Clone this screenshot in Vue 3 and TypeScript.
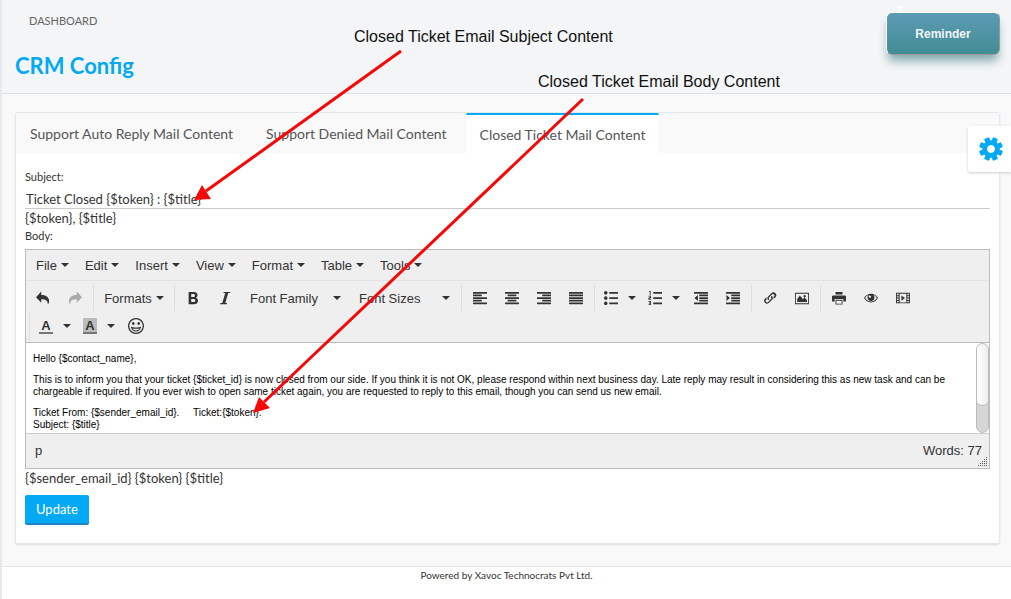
<script setup lang="ts">
import { ref } from 'vue'

interface Icon { d: string; muted?: boolean }
interface Tool { kind: 'icon' | 'split' | 'color' | 'menu' | 'select'; label: string; icon?: Icon; boxed?: boolean }

const tabs = ['Support Auto Reply Mail Content', 'Support Denied Mail Content', 'Closed Ticket Mail Content']
const activeTab = ref(2)
const subject = ref('Ticket Closed {$token} : {$title}')

const menus = ['File', 'Edit', 'Insert', 'View', 'Format', 'Table', 'Tools']

const bar = (x: number, y: number, w: number) => `M${x} ${y}h${w}v2h${-w}z`
const icon = (label: string, d: string, muted = false): Tool => ({ kind: 'icon', label, icon: { d, muted } })

const undo = 'M6 0.5v4c6 0 9 3 9 7 0 1.500-.6 3-1.500 4 .2-4-2-6-7.500-6v4L0 7z'
const redo = 'M10 0.5v4c-6 0-9 3-9 7 0 1.500.6 3 1.500 4-.2-4 2-6 7.500-6v4L16 7z'
const dot = (y: number) => `M2 ${y - 2}a2 2 0 1 0 .01 0z`
const full = bar(0, 1, 16) + bar(0, 13, 16)

const rows: Tool[][][] = [
  [
    [icon('Undo', undo), icon('Redo', redo, true)],
    [{ kind: 'menu', label: 'Formats' }],
    [
      icon('Bold', 'M3 1h6.200c2.600 0 4 1.500 4 3.600 0 1.500-.8 2.600-2 3.100 1.600.4 2.500 1.700 2.500 3.400C13.700 13.600 12 15 9.300 15H3zM6 3.300v3.500h2.300c1.200 0 1.900-.7 1.900-1.800s-.7-1.700-1.900-1.700zM6 9v3.700h2.600c1.300 0 2-.7 2-1.900S9.900 9 8.600 9z'),
      icon('Italic', 'M6.500 1H14l-.3 1.200h-2L8.300 13.800h2L10 15H2.500l.3-1.200h2.100L8.300 2.200h-2z'),
      { kind: 'select', label: 'Font Family' },
      { kind: 'select', label: 'Font Sizes' },
    ],
    [
      icon('Align left', full + bar(0, 4, 10) + bar(0, 7, 16) + bar(0, 10, 10)),
      icon('Align center', full + bar(3, 4, 10) + bar(0, 7, 16) + bar(3, 10, 10)),
      icon('Align right', full + bar(6, 4, 10) + bar(0, 7, 16) + bar(6, 10, 10)),
      icon('Justify', full + bar(0, 4, 16) + bar(0, 7, 16) + bar(0, 10, 16)),
    ],
    [
      { kind: 'split', label: 'Bullet list', icon: { d: bar(6, 1, 10) + bar(6, 7, 10) + bar(6, 13, 10) + dot(2) + dot(8) + dot(14) } },
      { kind: 'split', label: 'Numbered list', icon: { d: bar(6, 1, 10) + bar(6, 7, 10) + bar(6, 13, 10) + 'M1.500 0H3v4.500H2V1H1zM.5 5.500h3v2.600l-2 1h2v1H.5V7.600l2-.8v-.4h-2zM.5 11.500h3V16h-3v-1h2v-.8h-1.500v-1h1.500v-.8h-2z' } },
      icon('Decrease indent', full + bar(6, 4, 10) + bar(6, 7, 10) + bar(6, 10, 10) + 'M4.500 4.500v7L0.5 8z'),
      icon('Increase indent', full + bar(6, 4, 10) + bar(6, 7, 10) + bar(6, 10, 10) + 'M0.5 4.500v7l4-3.500z'),
    ],
    [
      icon('Insert link', 'M6.900 9.900l-.8.800a3.200 3.200 0 0 1 0-4.600l3.500-3.500a3.300 3.300 0 0 1 4.600 0 3.300 3.300 0 0 1 0 4.600l-2 2c.1-.8 0-1.600-.3-2.300l1-1a1.700 1.700 0 0 0-2.300-2.300L7.100 7.100a1.700 1.700 0 0 0 0 2.300zM9.300 6.100l.8-.4a3.200 3.200 0 0 1 .1 4.600l-3.700 3.500a3.300 3.300 0 0 1-4.600-4.600l2-2c-.1.800 0 1.600.3 2.300l-1 1a1.700 1.700 0 0 0 2.300 2.300l3.500-3.500a1.700 1.700 0 0 0 0-2.300z'),
      icon('Insert image', 'M0 2h16v13H0zM1 3v11h14V3zM2.500 12.500V9l3-4 3.500 4.200 2-1.700 2.700 3v2zM11 4.500a1.400 1.400 0 1 0 .01 0z'),
    ],
    [
      icon('Print', 'M4 1h8v3H4zM1 5h14l1 1v6h-3V9H3v3H0V6zM4 10h8v5.500H4zM5 11v3.500h6V11z'),
      icon('Preview', 'M8 3c3.500 0 6.500 2 8 5-1.500 3-4.500 5-8 5s-6.500-2-8-5c1.500-3 4.500-5 8-5zM1.300 8c1.200 2.300 3.800 4 6.700 4s5.500-1.700 6.700-4C13.700 6.200 12 4.800 10.500 4.400a4 4 0 1 1-5 0C4 4.800 2.300 6.200 1.300 8zM6.700 5a1.400 1.400 0 1 0 .01 0z'),
      icon('Insert video', 'M0 2h16v12H0zM1 3.200v1.600h2V3.200zM1 6v1.500h2V6zM1 8.700v1.500h2V8.700zM1 11.300v1.500h2v-1.500zM4.200 3v10h7.600V3zM13 3.200v1.600h2V3.200zM13 6v1.500h2V6zM13 8.700v1.500h2V8.700zM13 11.300v1.500h2v-1.500zM6.200 5l4 3-4 3z'),
    ],
  ],
  [
    [
      { kind: 'color', label: 'Text color' },
      { kind: 'color', label: 'Background color', boxed: true },
      icon('Emoticons', 'M8 0a8 8 0 1 1-.01 0zM8 1.300a6.700 6.700 0 1 0 .01 0zM5.300 4a1.300 1.500 0 1 1-.01 0zM10.700 4a1.300 1.500 0 1 1-.01 0zM2.800 8.500c1.500.8 3.300 1.100 5.200 1.100s3.700-.3 5.200-1.100c-.4 2.900-2.500 5-5.200 5s-4.800-2.100-5.200-5zM4.500 10.400c.8 1.300 2 2 3.500 2s2.700-.7 3.500-2c-1.100.3-2.300.4-3.500.4s-2.400-.1-3.500-.4z'),
    ],
  ],
]

const gear = (() => {
  const p = (r: number, deg: number) => {
    const a = (deg * Math.PI) / 180
    return `${(12 + r * Math.cos(a)).toFixed(2)} ${(12 + r * Math.sin(a)).toFixed(2)}`
  }
  let d = ''
  for (let i = 0; i < 8; i++) {
    const c = i * 45 + 22.5
    d += `${i ? 'L' : 'M'}${p(8.8, c - 17)}L${p(11.4, c - 14)}Q${p(12.1, c - 12)} ${p(12, c - 8)}L${p(12, c + 8)}Q${p(12.1, c + 12)} ${p(11.4, c + 14)}L${p(8.8, c + 17)}`
  }
  return d + 'zM12 8a4 4 0 1 0 .01 0z'
})()
</script>

<template>
  <div class="page">
    <header class="top">
      <div class="heading">
        <a class="crumb" href="#">DASHBOARD</a>
        <h1>CRM Config</h1>
      </div>
      <button class="reminder" type="button">Reminder</button>
    </header>

    <main>
      <section class="card">
        <div class="tabs" role="tablist">
          <button v-for="(t, i) in tabs" :key="t" type="button" role="tab" class="tab" :class="{ active: i === activeTab }" :aria-selected="i === activeTab" @click="activeTab = i">{{ t }}</button>
        </div>

        <form class="form" @submit.prevent>
          <label class="label" for="subject">Subject:</label>
          <input id="subject" v-model="subject" class="subject" type="text" />
          <p class="hint">{$token}, {$title}</p>
          <span id="body-label" class="label">Body:</span>

          <div class="editor">
            <div class="menubar">
              <button v-for="m in menus" :key="m" type="button" class="menu">{{ m }}<i class="caret"></i></button>
            </div>
            <div class="toolbar">
              <div v-for="(row, r) in rows" :key="r" class="row" :class="{ second: r === 1 }">
                <div v-for="(group, g) in row" :key="g" class="group">
                  <template v-for="tool in group" :key="tool.label">
                    <span v-if="tool.kind === 'select'" class="pick">
                      <select :aria-label="tool.label"><option>{{ tool.label }}</option></select>
                      <i class="caret"></i>
                    </span>
                    <button v-else type="button" class="tool" :class="tool.kind" :aria-label="tool.label">
                      <template v-if="tool.kind === 'menu'">{{ tool.label }}</template>
                      <span v-else-if="tool.kind === 'color'" class="letter" :class="{ boxed: tool.boxed }">A</span>
                      <svg v-else-if="tool.icon" viewBox="0 0 16 16" :class="{ muted: tool.icon.muted, large: tool.label === 'Emoticons' }"><path :d="tool.icon.d" fill-rule="evenodd" /></svg>
                      <i v-if="tool.kind !== 'icon'" class="caret"></i>
                    </button>
                  </template>
                </div>
              </div>
            </div>
            <div class="canvas">
              <div class="text" contenteditable="true" role="textbox" aria-multiline="true" aria-labelledby="body-label" spellcheck="false">
                <p>Hello {$contact_name},</p>
                <p>This is to inform you that your ticket {$ticket_id} is now closed from our side. If you think it is not OK, please respond within next business day. Late reply may result in considering this as new task and can be chargeable if required. If you ever wish to open same ticket again, you are requested to reply to this email, though you can send us new email.</p>
                <p>Ticket From: {$sender_email_id}. &nbsp; &nbsp; Ticket:{$token}.<br />Subject: {$title}</p>
              </div>
              <div class="track"><div class="thumb"></div></div>
            </div>
            <div class="status">
              <span>p</span>
              <span>Words: 77</span>
              <svg class="grip" viewBox="0 0 9 9"><path d="M8 0h1v1H8zM6 2h1v1H6zM8 2h1v1H8zM4 4h1v1H4zM6 4h1v1H6zM8 4h1v1H8zM2 6h1v1H2zM4 6h1v1H4zM6 6h1v1H6zM8 6h1v1H8zM0 8h1v1H0zM2 8h1v1H2zM4 8h1v1H4zM6 8h1v1H6zM8 8h1v1H8z" /></svg>
            </div>
          </div>

          <p class="hint">{$sender_email_id} {$token} {$title}</p>
          <button class="update" type="submit">Update</button>
        </form>
      </section>
    </main>

    <footer>Powered by Xavoc Technocrats Pvt Ltd.</footer>

    <button class="settings" type="button" aria-label="Settings">
      <svg viewBox="0 0 24 24"><path :d="gear" fill-rule="evenodd" /></svg>
    </button>

    <p class="note subject-note">Closed Ticket Email Subject Content</p>
    <p class="note body-note">Closed Ticket Email Body Content</p>
    <svg class="arrows" width="620" height="430" viewBox="0 0 620 430" aria-hidden="true">
      <path d="M401 51L206 191M583 99L264 402" />
      <path class="head" d="M194 200L202 185L211 199zM253 413L259 397L270 408z" />
    </svg>
  </div>
</template>

<style>
body { background: #fff; }
</style>

<style scoped>
* { box-sizing: border-box; }
.page { position: relative; min-height: 100vh; border-left: 2px solid #e6e9ed; font-family: Lato, "Open Sans", sans-serif; font-size: 13px; color: #333; background: #fff; }
button, select, input { font: inherit; color: inherit; margin: 0; }
button { border: 0; background: none; padding: 0; cursor: pointer; }
p, h1 { margin: 0; }

.top { display: flex; justify-content: space-between; align-items: flex-start; height: 94px; padding: 12px 11px 0 13px; background: #f3f5f7; border-bottom: 1px solid #dde1e6; }
.heading { display: flex; flex-direction: column; }
.crumb { margin-left: 14px; font-size: 11px; line-height: 18px; color: #666; text-decoration: none; }
h1 { margin-top: 20px; font-size: 22px; line-height: 32px; font-weight: 700; color: #03a9f4; }
.reminder { position: relative; width: 114px; height: 43px; font: bold 12px "Liberation Sans", Arial, sans-serif; color: #f3f5f7; border: 1px solid; border-color: #fff #999 #999 #fff; border-radius: 6px; background: linear-gradient(#5c9cb5, #428b93) border-box; box-shadow: 0 8px 10px -2px #86abb1; }
.reminder::before { content: ""; position: absolute; left: 9px; top: -7px; border: solid transparent; border-width: 4px 4px 0; border-top-color: #fff; }

main { padding: 18px 11px 22px 13px; background: #f9f9f9; }
.card { border: 1px solid #e4e9ee; border-bottom-color: #e6e6e6; border-radius: 3px; background: #fff; box-shadow: 0 1px 2px #ddd; }
.tabs { display: flex; gap: 5px; height: 40px; background: #f9f9f9; }
.tab { padding: 0 14px 2px; font-size: 14px; color: #555; white-space: nowrap; border-top: 2px solid transparent; }
.tab.active { padding-bottom: 0; background: #fff; border-top-color: #03a9f4; border-radius: 2px 2px 0 0; }

.form { padding: 15px 9px 18px; display: flex; flex-direction: column; align-items: stretch; }
.label { font-size: 11px; line-height: 18px; }
.subject { height: 23px; padding: 4px 1px 0; border: 0; border-bottom: 1px solid #ccc; outline: 0; font-size: 13px; background: none; }
.hint { font-size: 13px; line-height: 18px; }
.editor { margin-top: 4px; border: 1px solid #bbb; background: #efefef; font-family: "Liberation Sans", Arial, sans-serif; font-size: 13px; }
.caret { flex: none; width: 0; height: 0; border: solid transparent; border-width: 4px 4px 0; border-top-color: #333; }
.menubar { display: flex; height: 31px; padding-left: 2px; border-bottom: 1px solid #e3e3e3; }
.menu { display: flex; align-items: center; gap: 4px; padding: 0 8px; }
.toolbar { padding-left: 1px; border-bottom: 1px solid #bbb; }
.row { display: flex; height: 30px; padding-top: 4px; }
.row.second { height: 31px; padding: 1px 0 1px 2px; }
.group { display: flex; padding: 0 2px; border-left: 1px solid #ddd; }
.row:not(.second) .group:first-child { border-left: 0; padding-left: 0; }
.tool { display: flex; align-items: center; justify-content: center; width: 32px; height: 26px; }
.row.second .tool { height: 27px; }
.tool svg { width: 14px; height: 14px; fill: #333; }
.tool svg.large { width: 16px; height: 16px; }
.tool svg.muted { fill: #aaa; }
.tool.menu { width: 76px; padding: 0; gap: 4px; }
.tool.split, .tool.color { width: 44px; gap: 10px; justify-content: flex-start; padding-left: 7px; }
.letter { width: 14px; height: 16px; font-size: 13px; line-height: 15px; font-weight: 700; border-bottom: 2px solid #777; }
.letter.boxed { background: #bbb; }
.pick { position: relative; display: flex; align-items: center; width: 109px; }
.pick select { width: 100%; height: 26px; padding: 0 0 0 9px; appearance: none; border: 0; background: none; outline: 0; }
.pick .caret { position: absolute; right: 9px; }
.canvas { display: flex; height: 90px; background: #fff; }
.text { flex: 1; overflow: hidden; padding: 10px 7px 0; outline: 0; font-size: 10px; line-height: 12px; color: #000; }
.text p { margin-bottom: 9px; }
.track { width: 13px; border: 1px solid #bbb; border-radius: 7px; background: #d6d6d6; }
.thumb { height: 62px; border-bottom: 1px solid #bbb; border-radius: 6px; background: linear-gradient(90deg, #fff, #eee); }
.status { position: relative; display: flex; justify-content: space-between; align-items: center; height: 35px; padding: 0 7px 2px 9px; border-top: 1px solid #ccc; }
.grip { position: absolute; right: 2px; bottom: 2px; width: 9px; height: 9px; fill: #555; }
.update { align-self: flex-start; margin-top: 8px; height: 30px; padding: 0 11px; font-size: 13px; color: #fff; background: #03a9f4; border-bottom: 2px solid #1b87c9; border-radius: 2px; }

footer { border-top: 1px solid #e4e4e4; font-size: 10px; line-height: 17px; text-align: center; }
.settings { position: absolute; right: 0; top: 126px; width: 43px; height: 46px; padding-left: 2px; display: flex; align-items: center; justify-content: center; background: #fff; border-radius: 3px 0 0 3px; box-shadow: 0 1px 3px #ccc; }
.settings svg { width: 24px; height: 24px; fill: #03a9f4; }
.note { position: absolute; font: 16px/20px "Liberation Sans", Arial, sans-serif; color: #111; white-space: nowrap; }
.subject-note { left: 352px; top: 27px; }
.body-note { left: 536px; top: 72px; }
.arrows { position: absolute; left: -2px; top: 0; pointer-events: none; fill: none; stroke: #f40808; stroke-width: 3; }
.arrows .head { fill: #f40808; stroke: none; }
</style>
